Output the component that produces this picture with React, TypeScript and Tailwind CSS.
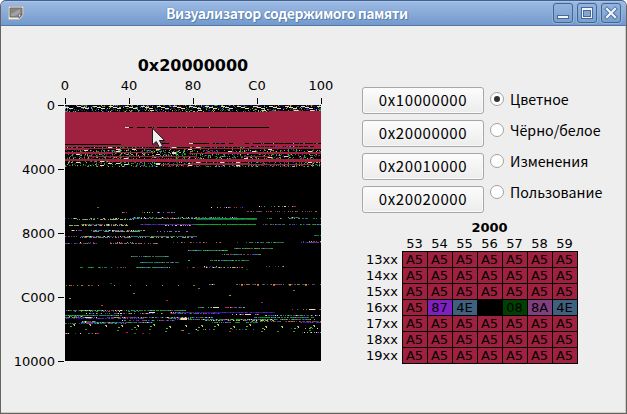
import React from "react";

const SANS = "font-['Noto_Sans_CJK_SC','Noto_Sans',sans-serif]";
const DEJAVU = "font-['DejaVu_Sans',sans-serif]";
const CRIMSON = "#a0203f";
const CREAM = "#eadcc0";

type Dot = { x: number; y: number; w: number; c: string };

const MIXED = ["#17a02c", "#00c92a", "#2468d8", "#1a1ad0", "#b020a8", "#30b4a8", "#d82028", "#6030b0", "#87c060", "#803860", "#006028", "#d0b020", "#e6dccb"];
const GREEN = ["#008a18", "#10a810", "#00d820", "#187848", "#206868", "#4060b0", "#107838", "#2868c0", "#58b098", "#903868"];
const PURPLE = ["#40009c", "#5030a0", "#48106c", "#2020b0", "#603898", "#803890", "#404080"];
const DULL = ["#782040", "#983858", "#808020", "#206040", "#404898", "#a03050", "#b07030"];
const NOISE = ["#003000", "#004810", "#000060", "#280010", "#109020", "#00b020", "#2030c0", "#a0203f", "#a0203f", "#b8a890", "#b0c020", "#802020", "#30a090", "#8030a0"];
const TABLE = ["#003000", "#000060", "#0010a0", "#280010", "#109020", "#2030c0", "#404010", "#b0c020", "#802020", "#30a090", "#a8a090"];

function hash(x: number, y: number) {
  let n = Math.imul(x + 71, 374761393) + Math.imul(y + 37, 668265263);
  n = Math.imul(n ^ (n >>> 13), 1274126177);
  return ((n ^ (n >>> 16)) >>> 0) / 4294967296;
}

// row, first column, end column, share of lit bytes, colours
type Strip = [number, number, number, number, string[]];
const strips: Strip[] = [
  [101, 185, 231, 0.22, MIXED], [102, 145, 180, 0.3, MIXED], [106, 180, 252, 0.4, DULL],
  [107, 57, 62, 0.6, MIXED], [107, 76, 114, 0.5, MIXED],
  [112, 68, 172, 0.45, MIXED], [113, 0, 12, 0.5, MIXED], [113, 24, 66, 0.5, MIXED], [113, 66, 186, 0.84, MIXED],
  [114, 12, 70, 0.72, ["#a0bd72", "#7ba06b", "#9a6dab"]], [113, 131, 192, 1, ["#00a010", "#00c820", "#10a010"]], [114, 131, 192, 1, ["#404098", "#245890", "#403898", "#108018"]],
  [113, 202, 256, 0.45, GREEN], [112, 222, 236, 0.6, MIXED],
  [119, 16, 62, 0.8, MIXED], [119, 75, 130, 1, PURPLE], [119, 130, 192, 0.96, ["#00b020", "#00a000", "#307030", "#00b020"]],
  [119, 198, 256, 0.72, PURPLE.concat(GREEN)], [120, 0, 64, 0.58, ["#b6bd77", "#9b6d9f", "#88bc60"]], [120, 100, 126, 0.45, ["#ad75af", "#d7c6ac"]],
  [125, 5, 18, 0.8, MIXED], [125, 26, 80, 0.65, MIXED], [126, 26, 75, 0.75, ["#58a090", "#6666b8", "#86a870"]], [126, 80, 126, 0.33, ["#8070c0"]],
  [131, 0, 12, 0.6, MIXED], [131, 16, 66, 0.75, MIXED], [131, 66, 132, 0.95, GREEN.concat(["#5144a0"])], [132, 14, 66, 0.7, ["#7770b0", "#398e6a", "#a86584"]], [132, 70, 128, 0.45, ["#bd8d99", "#b77094"]],
  [130, 249, 256, 0.9, ["#008038", "#188050"]],
  [138, 0, 32, 0.75, PURPLE.concat(DULL)], [137, 13, 30, 0.35, MIXED], [137, 44, 70, 0.35, MIXED], [138, 44, 94, 0.6, ["#a96583", "#a04e78"]],
  [137, 108, 178, 0.25, DULL], [137, 181, 220, 0.8, GREEN], [137, 236, 256, 0.85, PURPLE], [136, 238, 256, 0.35, MIXED],
  [143, 169, 208, 0.87, GREEN.concat(DULL)], [145, 123, 163, 0.85, GREEN], [151, 65, 104, 0.86, GREEN], [149, 157, 196, 0.85, GREEN.concat(DULL)],
  [155, 145, 184, 0.85, GREEN], [157, 75, 114, 0.8, GREEN],
  [162, 15, 47, 0.55, GREEN], [162, 52, 64, 0.5, DULL], [162, 71, 108, 0.8, GREEN], [162, 115, 130, 0.3, DULL], [162, 138, 178, 0.7, MIXED], [161, 138, 152, 0.3, MIXED], [161, 199, 220, 0.45, MIXED],
  [180, 0, 28, 0.42, ["#a08010", "#c05010", "#604020"]], [179, 143, 150, 0.8, MIXED], [179, 171, 256, 0.55, DULL],
  [202, 132, 150, 0.6, MIXED], [202, 160, 180, 0.7, MIXED], [204, 227, 256, 0.5, DULL],
  [205, 0, 66, 0.85, MIXED], [205, 66, 121, 0.9, GREEN], [206, 9, 80, 0.35, MIXED], [208, 20, 118, 0.55, MIXED.concat(PURPLE)],
  [207, 110, 210, 0.95, PURPLE.slice(0, 4)], [208, 115, 158, 0.8, GREEN.concat(PURPLE)], [207, 105, 125, 0.7, MIXED],
  [209, 165, 195, 0.4, MIXED], [210, 0, 57, 0.98, GREEN], [210, 200, 256, 0.75, PURPLE.concat(MIXED)],
  [211, 4, 18, 0.7, MIXED], [212, 0, 32, 0.75, MIXED], [212, 42, 148, 0.9, PURPLE.slice(0, 4).concat(MIXED)], [212, 188, 249, 0.85, GREEN],
  [213, 0, 80, 0.65, PURPLE], [213, 103, 126, 0.8, MIXED], [214, 110, 250, 0.85, GREEN.concat(MIXED)],
  [215, 56, 110, 0.65, PURPLE.concat(MIXED)], [215, 139, 210, 0.55, MIXED], [216, 17, 31, 0.68, MIXED], [216, 186, 256, 0.65, DULL],
  [217, 15, 88, 0.92, GREEN.concat(MIXED)], [217, 144, 193, 0.5, GREEN], [217, 235, 256, 0.8, PURPLE], [218, 0, 62, 0.65, GREEN.concat(PURPLE)],
  [224, 42, 80, 0.12, MIXED], [224, 128, 200, 0.16, MIXED], [223, 225, 256, 0.35, MIXED], [228, 0, 34, 0.35, MIXED], [228, 70, 100, 0.12, DULL], [227, 236, 256, 0.6, MIXED],
];

function buildMap(): Dot[] {
  const out: Dot[] = [];
  const put = (x: number, y: number, w: number, c: string) => out.push({ x, y, w, c });
  const noise = (y: number, a: number, b: number, density: number, colors: string[]) => {
    for (let x = a; x < b; x++) {
      const h = hash(x, y);
      if (h < density) put(x, y, 1, colors[Math.floor(hash(y, x) * colors.length)]);
    }
  };
  // vector table
  for (let y = 0; y < 7; y++) noise(y, 0, y === 6 ? 204 : 256, y === 0 ? 0.55 : 0.38, TABLE);
  for (let k = -1; k < 16; k++) {
    for (let s = 0; s < 3; s++) put(k * 16 + 12 + s * 4, s + 1, 4, CREAM);
    if (hash(k, 91) > 0.6) put(k * 16 + 5, 5, 4, CREAM);
  }
  put(204, 6, 52, CRIMSON);
  for (let y = 7; y < 42; y++) put(0, y, 256, CRIMSON);
  // stack marks in the filled area
  put(60, 22, 4, CREAM);
  [[64, 4], [72, 8], [83, 6], [92, 11], [104, 6], [108, 96]].forEach(([x, w]) => put(x, 22, w, "#000"));
  [[87, "#1a904a"], [112, "#208888"], [116, "#187020"], [121, "#b08020"], [128, "#c03060"], [144, "#b0a020"], [161, "#683020"]].forEach(([x, c]) => put(x as number, 22, 1, c as string));
  put(0, 39, 56, "#000");
  put(97, 38, 7, "#000");
  put(124, 38, 4, CREAM);
  [[128, 16], [148, 12], [164, 4], [180, 4], [188, 68]].forEach(([x, w]) => { put(x, 38, w, "#000"); noise(38, x, x + w, 0.2, NOISE); });
  for (let x = 184; x < 250; x++) if (hash(x, 41) < 0.65) put(x, 41, 1, hash(x, 9) < 0.6 ? "#001010" : MIXED[x % 11]);
  // interleaved code and fill rows
  for (let y = 42; y < 62; y++) {
    put(0, y, 256, "#000");
    noise(y, 0, 256, y === 44 ? 0.05 : 0.36, NOISE);
    for (let x = 3; x < 253; x += 8) if (hash(x, y) < 0.1) put(x, y, 4, CREAM);
    for (let x = 7; x < 253; x += 8) if (hash(x, y + 22) < 0.5) put(x, y, 1, "#18b820");
  }
  [[42, 184, 72], [43, 0, 256], [44, 0, 24], [47, 0, 90], [47, 140, 116], [48, 0, 48], [48, 124, 132], [51, 22, 110], [51, 180, 24], [54, 0, 256], [55, 0, 256], [56, 44, 212], [58, 125, 60], [59, 96, 150]].forEach(([y, x, w]) => put(x, y, w, CRIMSON));

  strips.forEach(([y, a, b, density, colors]) => {
    for (let x = a; x < b; x++) {
      if (hash(x, y) < density) put(x, y, 1, colors[Math.floor(hash(x + 17, y + 3) * colors.length)]);
    }
  });
  [[84, 207], [148, 202], [180, 209], [20, 212], [244, 204], [116, 214], [116, 213]].forEach(([x, y]) => put(x, y, 6, CREAM));
  for (let x = 16; x < 128; x += 16) put(x + 1, 180, 1, "#b09010");
  for (let x = 176; x < 256; x += 16) { put(x, 179, 2, "#e09030"); put(x, 180, 2, "#a86018"); }
  for (let x = 8; x < 256; x += 16) {
    const y = 219 + Math.floor(hash(x, 55) * 3);
    put(x, y, 2, "#a8c030");
    put(x + 1, y + 1, 1, "#e0dc90");
    if (hash(x, 8) > 0.3) put(x - 3, y + 2, 2, "#70a828");
    if (hash(x, 3) > 0.4) put(x - 4, y + 5, 2, "#28a020");
  }
  [[4, 193, "#a8a030"], [68, 188, "#988020"], [101, 195, "#d01830"], [36, 200, "#d83040"], [196, 197, "#a010a0"], [164, 190, "#90b020"], [228, 185, "#806070"], [133, 183, "#8c6c28"], [128, 180, "#907020"], [45, 178, "#006028"], [123, 155, "#00d060"], [32, 102, "#607020"], [61, 227, "#d01060"], [123, 228, "#187088"], [69, 228, "#307030"], [117, 225, "#f05020"], [164, 226, "#b02048"], [181, 164, "#005010"], [219, 101, "#e0d8c0"], [228, 101, "#c01020"]].forEach(([x, y, c]) => put(x as number, y as number, 2, c as string));
  return out;
}

const dots = buildMap();

function MemoryMap() {
  return (
    <svg className="block size-64 bg-black" viewBox="0 0 256 256" shapeRendering="crispEdges">
      {dots.map((d, i) => <rect key={i} x={d.x} y={d.y} width={d.w} height="1" fill={d.c} />)}
      <g shapeRendering="auto">
        <path d="M87.5 23.5v18l4-3.5 3 6 3-1.5-2.8-5.5h5.3z" fill="#333" opacity=".45" transform="translate(1 1)" />
        <path d="M87.5 23.2v16.6l3.8-3.3 3.2 6 3-1.6-3.1-5.4h5.1z" fill="#eee" stroke="#1c1a1b" strokeWidth="1" />
      </g>
    </svg>
  );
}

function WindowButton({ children }: { children: React.ReactNode }) {
  return (
    <div className="h-5 w-5 rounded-[3px] border border-[#45678e] bg-gradient-to-b from-[#92b4df] to-[#7b9fce] shadow-[0_0_0_1px_#94b3dc]">
      <svg viewBox="1 1 18 18" className="block size-[18px]" shapeRendering="crispEdges">{children}</svg>
    </div>
  );
}

function TitleBar() {
  return (
    <header className="flex h-[26px] items-start rounded-t-[5px] border-t border-b border-t-[#44608c] border-b-[#5478a8] bg-gradient-to-b from-[#9cbae4] via-[#89abd9] to-[#7399cc] shadow-[inset_0_1px_0_#abc5e9]">
      <svg className="mt-[5px] ml-[7px] block h-[14px] w-4" viewBox="0 0 16 14">
        <path d="M.5.5h15v8l-4 5H.5z" fill="#f0efeb" stroke="#b9b8b1" />
        <path d="M2 2h12v6l-4 3H2z" fill="#858585" stroke="#6e6e6e" />
        <path d="M3 8l9-5v4l-5 3H3z" fill="#a2a2a2" />
        <path d="M15 8l-4 5-1-3 2-1V8z" fill="#5e605e" /><path d="M11 9l2-.5-2 3z" fill="#ddd" />
      </svg>
      <h1 className={`${SANS} ml-[142px] w-[248px] whitespace-nowrap text-[14px] leading-[24px] font-bold tracking-[-0.5px] text-white [text-shadow:0_0_1px_#3c6499,1px_1px_0_#5b80b2]`}>Визуализатор содержимого памяти</h1>
      <div className="mt-[2px] mr-[5px] ml-auto flex gap-1">
        <WindowButton><path d="M4 12h12v4H4z" fill="#456a99" /><path d="M5 13h10v2H5z" fill="#f2f4f7" /></WindowButton>
        <WindowButton><path d="M4.5 4.5h11v11h-11z" fill="#f0f3f7" stroke="#456a99" /><path d="M6.5 7.5h7v6h-7z" fill="#83a5d2" stroke="#456a99" /></WindowButton>
        <WindowButton><g shapeRendering="auto" strokeLinecap="square"><path d="M6 6l8 8m0-8l-8 8" stroke="#456a99" strokeWidth="4" /><path d="M6 6l8 8m0-8l-8 8" stroke="#eff3f8" strokeWidth="2.3" /></g></WindowButton>
      </div>
    </header>
  );
}

function Graph() {
  return (
    <section className={`${DEJAVU} ml-2 w-[326px] pt-[30px] text-[13px]`}>
      <h2 className="ml-[56px] w-64 text-center text-[16px] leading-5 font-bold">0x20000000</h2>
      <div className="mt-px ml-[24px] flex">
        {["0", "40", "80", "C0", "100"].map((t) => (
          <div key={t} className="flex w-16 shrink-0 flex-col items-center">
            <span className="h-[21px] leading-[17px]">{t}</span>
            <i className="ml-px h-[6px] w-px bg-black" />
          </div>
        ))}
      </div>
      <div className="mt-px flex">
        <div className="flex w-[56px] flex-col">
          {["0", "4000", "8000", "C000", "10000"].map((t) => (
            <div key={t} className="flex h-16 items-start justify-end pr-px">
              <span className="-mt-[7px] leading-4">{t}</span>
              <i className="ml-[3px] h-px w-[6px] bg-black" />
            </div>
          ))}
        </div>
        <MemoryMap />
      </div>
    </section>
  );
}

const ADDRESSES = ["0x10000000", "0x20000000", "0x20010000", "0x20020000"];
const MODES = ["Цветное", "Чёрно/белое", "Изменения", "Пользование"];
const CELL_ROWS = ["13xx", "14xx", "15xx", "16xx", "17xx", "18xx", "19xx"];
const LIVE: [string, string][] = [["A5", "bg-[#a0203f]"], ["87", "bg-[#8020c0]"], ["4E", "bg-[#406080]"], ["00", "bg-black"], ["08", "bg-[#004000]"], ["8A", "bg-[#804080]"], ["4E", "bg-[#406080]"]];
const FILL = LIVE.map((): [string, string] => ["A5", "bg-[#a0203f]"]);

function ByteTable() {
  return (
    <div className={`${DEJAVU} mt-[3px] text-[13px]`}>
      <h3 className="ml-[41px] w-[175px] text-center leading-[18px] font-bold">2000</h3>
      <div className="ml-[41px] flex h-[14px] leading-[14px]">
        {[53, 54, 55, 56, 57, 58, 59].map((n) => <span key={n} className="w-[25px] text-center">{n}</span>)}
      </div>
      <div className="flex">
        <div className="w-[41px] pr-1 text-right leading-4">
          {CELL_ROWS.map((r) => <div key={r} className="h-4 leading-[17px]">{r}</div>)}
        </div>
        <div className="grid h-[113px] w-[176px] grid-cols-[repeat(7,24px)] grid-rows-[repeat(7,15px)] gap-px border border-black bg-black">
          {CELL_ROWS.flatMap((r) => (r === "16xx" ? LIVE : FILL).map(([v, bg], i) => (
            <span key={`${r}${i}`} className={`${bg} pr-px text-center leading-[15px] text-black`}>{v}</span>
          )))}
        </div>
      </div>
    </div>
  );
}

export default function App() {
  return (
    <div className="h-[414px] w-[627px] overflow-hidden bg-white">
      <main className="h-[414px] rounded-t-[6px] border-r border-b border-l border-[#65635f] bg-[#eeeeee] text-black shadow-[inset_-1px_-1px_0_#cfccc8]">
        <TitleBar />
        <div className="flex">
          <Graph />
          <section className="ml-[27px] pt-[61px]">
            <div className="flex h-[129px]">
              <div className={`${SANS} flex w-[122px] flex-col gap-[6px] text-[15px] tracking-[0.6px]`}>
                {ADDRESSES.map((a) => (
                  <button key={a} className="h-[27px] shrink-0 rounded-[3px] border border-[#a7a7a7] bg-gradient-to-b from-[#fcfcfc] to-[#ececec] pb-[2px] leading-[23px] shadow-[inset_0_0_0_1px_#fafafa]">{a}</button>
                ))}
              </div>
              <div className={`${SANS} -mt-[4px] ml-[6px] text-[14.2px]`}>
                {MODES.map((m, i) => (
                  <label key={m} className="flex h-[31px] items-center whitespace-nowrap">
                    <i className="flex size-[14px] items-center justify-center rounded-full border border-[#a2a2a2] bg-white">
                      {i === 0 && <b className="size-[6px] rounded-full bg-[#303030]" />}
                    </i>
                    <span className="ml-[6px] leading-5">{m}</span>
                  </label>
                ))}
              </div>
            </div>
            <div className="-ml-px"><ByteTable /></div>
          </section>
        </div>
      </main>
    </div>
  );
}
